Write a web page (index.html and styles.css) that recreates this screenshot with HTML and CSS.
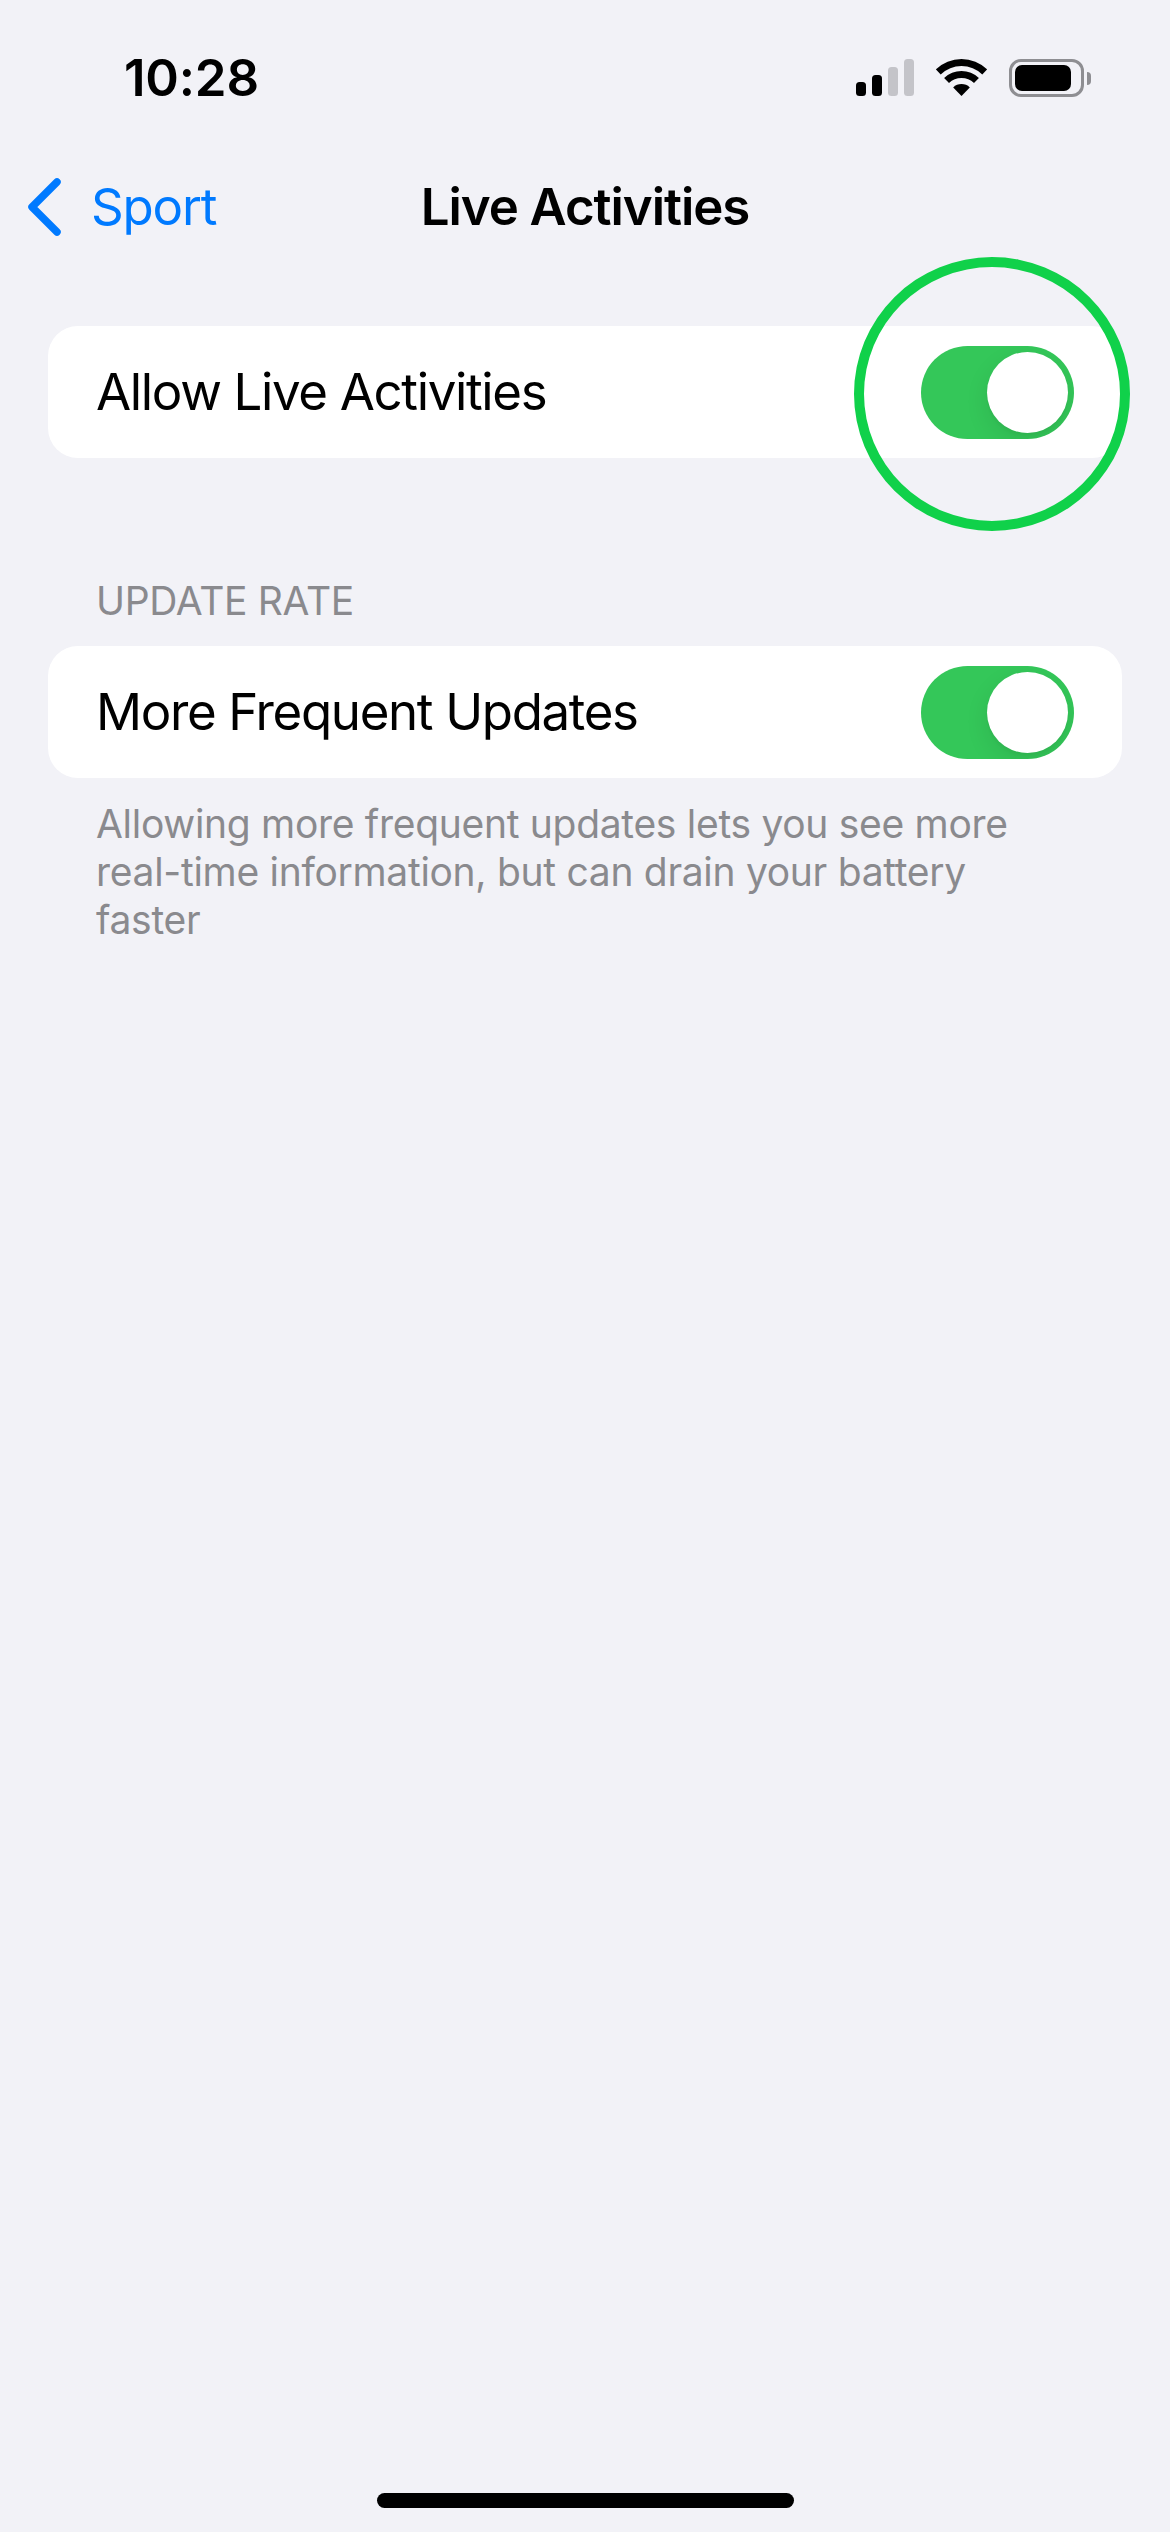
FILE: index.html
```html
<!DOCTYPE html>
<html lang="en">
<head>
<meta charset="utf-8">
<title>Live Activities</title>
<link rel="stylesheet" href="styles.css">
</head>
<body>
<div class="screen">
  <header class="status-bar">
    <span class="time">10:28</span>
    <div class="status-icons">
      <div class="signal">
        <span class="bar bar-1"></span>
        <span class="bar bar-2"></span>
        <span class="bar bar-3 off"></span>
        <span class="bar bar-4 off"></span>
      </div>
      <svg class="wifi" width="51" height="37" viewBox="0 0 51 37">
        <path d="M-.2 10.4A37 37 0 0 1 51.2 10.4L46.3 15.4A30 30 0 0 0 4.7 15.4Z"/>
        <path d="M8.1 19A25 25 0 0 1 42.9 19L38 24.1A18 18 0 0 0 13 24.1Z"/>
        <path d="M17.2 28.4A12 12 0 0 1 33.8 28.4L25.5 37Z"/>
      </svg>
      <div class="battery">
        <div class="battery-body"><span class="battery-fill"></span></div>
        <span class="battery-cap"></span>
      </div>
    </div>
  </header>

  <nav class="nav-bar">
    <a class="back">
      <svg class="chevron" width="36" height="60" viewBox="0 0 36 60">
        <path d="M31 5L6 30L31 55" fill="none" stroke="#007aff" stroke-width="7.5" stroke-linecap="round" stroke-linejoin="round"/>
      </svg>
      <span class="back-label">Sport</span>
    </a>
    <h1 class="nav-title">Live Activities</h1>
  </nav>

  <main class="content">
    <section class="card card-first">
      <span class="row-label">Allow Live Activities</span>
      <div class="toggle"><span class="knob"></span></div>
      <span class="highlight-ring"></span>
    </section>

    <h2 class="section-header">UPDATE RATE</h2>
    <section class="card">
      <span class="row-label">More Frequent Updates</span>
      <div class="toggle"><span class="knob"></span></div>
    </section>
    <p class="section-footer">Allowing more frequent updates lets you see more real-time information, but can drain your battery faster</p>
  </main>

  <div class="home-indicator"></div>
</div>
</body>
</html>
```

FILE: styles.css
```css
* { box-sizing: border-box; }

html, body {
  margin: 0;
  padding: 0;
  background: #f2f2f7;
}

.screen {
  width: 1170px;
  height: 2532px;
  display: flex;
  flex-direction: column;
  font-family: Inter, "Liberation Sans", sans-serif;
  color: #000;
  overflow: hidden;
}

/* Status bar */
.status-bar {
  height: 132px;
  padding: 49px 79px 0 124px;
  display: flex;
  justify-content: space-between;
  align-items: flex-start;
}

.time {
  font-size: 51px;
  font-weight: 600;
  line-height: 58px;
  letter-spacing: -0.2px;
}

.status-icons {
  display: flex;
  align-items: flex-start;
  padding-top: 10px;
}

.signal {
  display: flex;
  align-items: flex-end;
  gap: 6px;
  height: 37px;
  margin-right: 22px;
}

.bar {
  width: 10px;
  background: #000;
  border-radius: 3.5px;
}

.bar.off { background: #c4c4c9; }
.bar-1 { height: 14px; }
.bar-2 { height: 21px; }
.bar-3 { height: 29px; }
.bar-4 { height: 37px; }

.wifi {
  display: block;
  fill: #000;
  margin-right: 22px;
}

.battery {
  display: flex;
  align-items: center;
  height: 38px;
}

.battery-body {
  width: 75px;
  height: 38px;
  border: 3px solid #8e8e92;
  border-radius: 12px;
  padding: 3px;
}

.battery-fill {
  display: block;
  width: 56px;
  height: 26px;
  background: #000;
  border-radius: 7px;
}

.battery-cap {
  width: 4px;
  height: 13px;
  margin-left: 3px;
  background: #8e8e92;
  border-radius: 0 6px 6px 0;
}

/* Navigation bar */
.nav-bar {
  height: 128px;
  padding-top: 22px;
  position: relative;
  display: flex;
  align-items: center;
  justify-content: center;
}

.back {
  position: absolute;
  left: 26px;
  top: 11px;
  height: 128px;
  display: flex;
  align-items: center;
  color: #007aff;
}

.chevron { display: block; }

.back-label {
  font-size: 51px;
  line-height: 60px;
  margin-left: 29px;
  letter-spacing: -1.2px;
}

.nav-title {
  margin: 0;
  font-size: 51px;
  line-height: 60px;
  font-weight: 600;
  letter-spacing: -1.05px;
}

/* Content */
.content {
  padding: 66px 48px 0;
}

.card {
  position: relative;
  height: 132px;
  background: #fff;
  border-radius: 30px;
  display: flex;
  align-items: center;
  justify-content: space-between;
  padding: 0 48px 0 48px;
}

.row-label {
  font-size: 51px;
  line-height: 60px;
  letter-spacing: -1.35px;
}

.toggle {
  width: 153px;
  height: 93px;
  border-radius: 47px;
  background: #34c759;
  position: relative;
  overflow: hidden;
}

.knob {
  position: absolute;
  right: 6px;
  top: 6px;
  width: 81px;
  height: 81px;
  border-radius: 50%;
  background: #fff;
  box-shadow: 0 9px 24px rgba(0, 0, 0, 0.09), 0 3px 3px rgba(0, 0, 0, 0.03);
}

.highlight-ring {
  position: absolute;
  left: 806px;
  top: -69px;
  width: 276px;
  height: 274px;
  border: 10px solid #10d14a;
  border-radius: 50%;
}

.section-header {
  margin: 120px 0 0;
  padding-left: 48px;
  height: 68px;
  font-size: 39px;
  line-height: 46px;
  font-weight: 400;
  color: #8a8a8e;
  letter-spacing: -0.3px;
}

.section-footer {
  margin: 22px 0 0;
  padding: 0 48px;
  font-size: 39px;
  line-height: 48px;
  color: #8a8a8e;
  letter-spacing: -0.3px;
}

/* Home indicator */
.home-indicator {
  width: 417px;
  height: 15px;
  margin: auto auto 24px;
  background: #000;
  border-radius: 8px;
}
```
